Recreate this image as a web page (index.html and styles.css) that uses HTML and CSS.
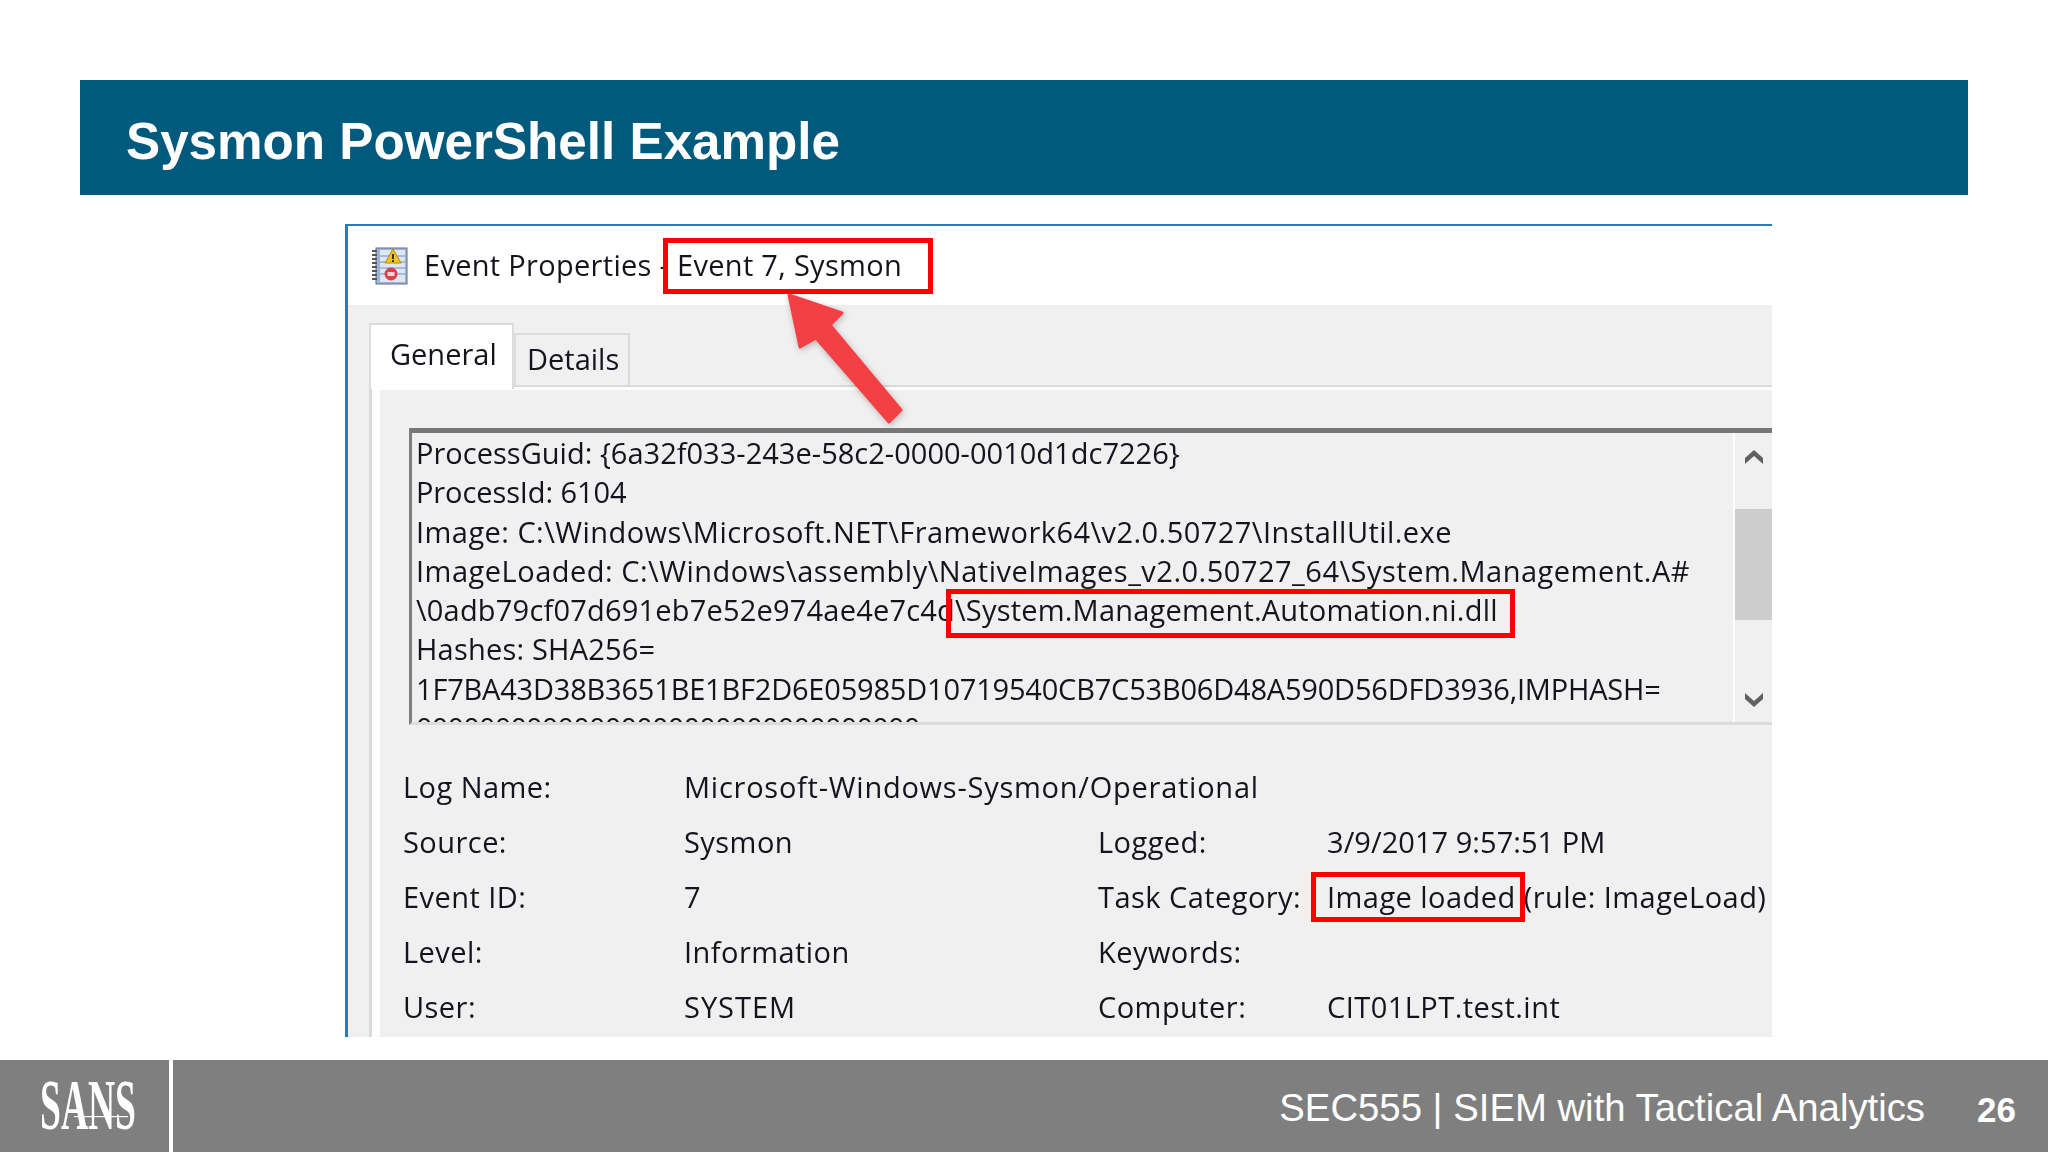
FILE: index.html
```html
<!DOCTYPE html>
<html lang="en">
<head>
<meta charset="utf-8">
<title>Sysmon PowerShell Example</title>
<link rel="stylesheet" href="styles.css">
</head>
<body>
<main class="slide">
  <header class="banner"><h1 class="banner-title">Sysmon PowerShell Example</h1></header>
  <section class="window">
    <div class="titlebar">
      <svg class="app-icon" viewBox="0 0 36 38" aria-hidden="true">
        <rect x="4" y="1" width="31" height="36" fill="#9db4d6" stroke="#5f6f8a"/>
        <rect x="8" y="3" width="25" height="32" fill="#dfe6f2"/>
        <path d="M8 9H33M8 15H33M8 21H33M8 27H33" stroke="#a9bbd8" stroke-width="2"/>
        <path d="M0 4h5M0 8h5M0 12h5M0 16h5M0 20h5M0 24h5M0 28h5M0 32h5" stroke="#555" stroke-width="2"/>
        <path d="M21 2l8 14H13z" fill="#f2c318" stroke="#b08a10"/>
        <rect x="20" y="7" width="2" height="5" fill="#333"/>
        <rect x="20" y="13" width="2" height="2" fill="#333"/>
        <circle cx="19" cy="27" r="6.5" fill="#d9414a"/>
        <rect x="15.5" y="25" width="7" height="4" fill="#f4d6d6"/>
      </svg>
      <span class="title-text">Event Properties - Event 7, Sysmon</span>
    </div>
    <div class="dialog">
      <div class="tabs">
        <div class="tab tab-active">General</div>
        <div class="tab">Details</div>
      </div>
      <div class="pane">
        <div class="pane-inner">
          <div class="logbox">
            <div class="logtext">
              <div class="sp-none">ProcessGuid: {6a32f033-243e-58c2-0000-0010d1dc7226}</div>
              <div class="sp-tight">ProcessId: 6104</div>
              <div class="sp-wide">Image: C:\Windows\Microsoft.NET\Framework64\v2.0.50727\InstallUtil.exe</div>
              <div class="sp-wider">ImageLoaded: C:\Windows\assembly\NativeImages_v2.0.50727_64\System.Management.A#</div>
              <div class="sp-mid">\0adb79cf07d691eb7e52e974ae4e7c4d\System.Management.Automation.ni.dll</div>
              <div class="sp-mid">Hashes: SHA256=</div>
              <div class="sp-hash">1F7BA43D38B3651BE1BF2D6E05985D10719540CB7C53B06D48A590D56DFD3936,IMPHASH=</div>
              <div class="sp-zero">00000000000000000000000000000000</div>
            </div>
            <div class="scrollbar">
              <div class="scroll-btn">
                <svg class="chev" viewBox="0 0 20 16" aria-hidden="true"><path d="M1 15V9L10 1L19 9V15L10 7Z" fill="#606060"/></svg>
              </div>
              <div class="scroll-thumb"></div>
              <div class="scroll-rest">
                <svg class="chev" viewBox="0 0 20 16" aria-hidden="true"><path d="M1 1V7L10 15L19 7V1L10 9Z" fill="#606060"/></svg>
              </div>
            </div>
          </div>
          <div class="fields">
            <div class="f-label">Log Name:</div><div class="f-value f-wide">Microsoft-Windows-Sysmon/Operational</div>
            <div class="f-label">Source:</div><div class="f-value">Sysmon</div><div class="f-label">Logged:</div><div class="f-value f-date">3/9/2017 9:57:51 PM</div>
            <div class="f-label">Event ID:</div><div class="f-value">7</div><div class="f-label">Task Category:</div><div class="f-value">Image loaded (rule: ImageLoad)</div>
            <div class="f-label">Level:</div><div class="f-value">Information</div><div class="f-label">Keywords:</div><div class="f-value"></div>
            <div class="f-label">User:</div><div class="f-value f-caps">SYSTEM</div><div class="f-label">Computer:</div><div class="f-value">CIT01LPT.test.int</div>
          </div>
        </div>
      </div>
    </div>
    <div class="redbox redbox-title"></div>
    <div class="redbox redbox-dll"></div>
    <div class="redbox redbox-task"></div>
    <svg class="arrow" viewBox="770 285 150 150" aria-hidden="true">
      <path d="M789 295L842 313L830 325L901 410L889 422L816 338L800 347Z" fill="#f44045" stroke="#f44045" stroke-width="3" stroke-linejoin="round"/>
    </svg>
  </section>
  <footer class="footer">
    <div class="logo-cell">
      <svg class="logo" viewBox="0 0 96 54" role="img" aria-label="SANS">
        <text class="logo-text" x="0" y="50" textLength="96" lengthAdjust="spacingAndGlyphs">SANS</text>
        <rect x="34" y="37" width="54" height="1.2" fill="#fff"/>
      </svg>
    </div>
    <div class="course">SEC555 | SIEM with Tactical Analytics</div>
    <div class="page-no">26</div>
  </footer>
</main>
</body>
</html>
```
FILE: styles.css
```css
* { box-sizing: border-box; }
html, body { margin: 0; padding: 0; background: #fff; }
.slide { width: 2048px; height: 1152px; display: flex; flex-direction: column; padding-top: 80px; overflow: hidden; font-family: "Liberation Sans", Arial, sans-serif; }
.banner { height: 115px; margin: 0 80px; background: #005a7e; display: flex; align-items: center; padding-left: 46px; }
.banner-title { margin: 8px 0 0; color: #fff; font-size: 51.2px; font-weight: 700; line-height: 1; }

.window { position: relative; margin: 29px 0 0 345px; width: 1427px; height: 813px; border-top: 2px solid #1f7fc6; border-left: 3px solid #1f7fc6; display: flex; flex-direction: column; background: #fff; color: #14141c; font-family: "Open Sans", sans-serif; font-size: 29px; filter: blur(0.5px); }
.titlebar { height: 79px; display: flex; align-items: center; padding: 0 0 0 24px; gap: 16px; flex: none; }
.app-icon { width: 36px; height: 38px; flex: none; }
.title-text { letter-spacing: 0.3px; margin-top: -2px; }
.dialog { flex: 1; min-height: 0; background: #f0f0f1; padding-left: 21px; display: flex; flex-direction: column; }
.tabs { height: 80px; flex: none; display: flex; align-items: flex-end; }
.tab { width: 116px; height: 52px; padding-left: 11px; background: #f0f0f1; border: 2px solid #dcdcdc; border-bottom: 0; line-height: 48px; }
.tab-active { width: 145px; height: 66px; margin-bottom: -4px; padding-left: 19px; background: #fff; line-height: 57px; position: relative; z-index: 1; }
.pane { flex: 1; min-height: 0; background: #fff; border-top: 2px solid #d9d9d9; border-left: 3px solid #d9d9d9; padding: 3px 0 0 8px; display: flex; }
.pane-inner { flex: 1; min-width: 0; background: #f0f0f1; padding-top: 38px; }
.logbox { height: 297px; margin-left: 29px; border-top: 5px solid #777; border-left: 3px solid #7d7d7d; border-bottom: 3px solid #dcdcdc; display: flex; }
.logtext { flex: 1; min-width: 0; overflow: hidden; padding-left: 4px; line-height: 39.3px; white-space: nowrap; }
.sp-none { letter-spacing: 0.02px; }
.sp-tight { letter-spacing: -0.1px; }
.sp-mid { letter-spacing: 0.2px; }
.sp-wide { letter-spacing: 0.45px; }
.sp-wider { letter-spacing: 0.5px; }
.sp-hash { letter-spacing: -0.2px; }
.sp-zero { letter-spacing: -0.85px; }
.scrollbar { width: 39px; flex: none; border-left: 2px solid #fff; display: flex; flex-direction: column; }
.scroll-btn { height: 76px; display: flex; justify-content: center; align-items: flex-start; padding-top: 16px; }
.scroll-thumb { height: 111px; background: #cdcdcd; }
.scroll-rest { flex: 1; display: flex; justify-content: center; align-items: flex-end; padding-bottom: 14px; }
.chev { width: 20px; height: 16px; display: block; }

.fields { margin: 34px 0 0 23px; display: grid; grid-template-columns: 281px 414px 229px 1fr; grid-auto-rows: 55px; align-items: center; white-space: nowrap; letter-spacing: 0.45px; }
.f-wide { grid-column: 2 / 5; letter-spacing: 0.75px; }
.f-date { letter-spacing: 0.05px; }
.f-caps { letter-spacing: 1px; }

.redbox { position: absolute; border: 5px solid #f00; }
.redbox-title { left: 315px; top: 12px; width: 270px; height: 56px; }
.redbox-dll { left: 598px; top: 363px; width: 569px; height: 49px; }
.redbox-task { left: 963px; top: 646px; width: 214px; height: 50px; }
.arrow { position: absolute; left: 422px; top: 59px; width: 150px; height: 150px; overflow: visible; filter: drop-shadow(1px 2px 3px rgba(90, 60, 60, 0.35)); }

.footer { margin-top: auto; height: 92px; background: #7f7f80; display: flex; align-items: center; color: #fff; }
.logo-cell { width: 169px; height: 100%; display: flex; align-items: center; padding-left: 40px; flex: none; }
.logo { width: 96px; height: 54px; display: block; overflow: visible; }
.logo-text { font-family: "Liberation Serif", serif; font-size: 72px; font-weight: 700; fill: #fff; }
.course { flex: 1; height: 100%; border-left: 4px solid #fff; text-align: right; font-size: 38.3px; line-height: 96px; padding-right: 52px; }
.page-no { width: 71px; font-size: 35px; font-weight: 700; flex: none; padding-top: 7px; }
```
